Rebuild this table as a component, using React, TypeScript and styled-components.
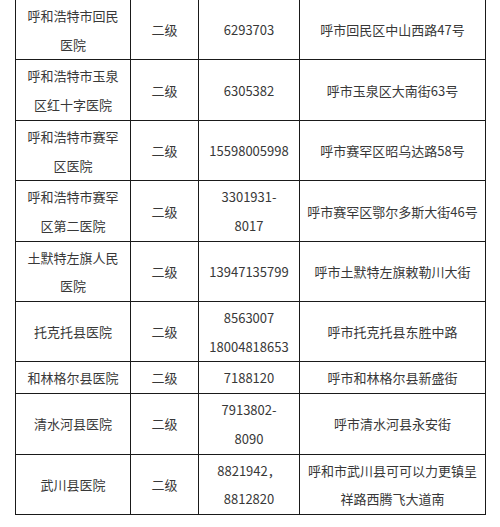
import styled, { createGlobalStyle } from 'styled-components'

const GlobalStyle = createGlobalStyle`
  body {
    margin: 0;
    background: #fff;
    font-family: "Noto Sans CJK SC", "Noto Sans", sans-serif;
  }
`

const Page = styled.div`
  padding-left: 15px;
  margin-top: -1px;
`

const Table = styled.table`
  width: 470px;
  border-collapse: collapse;
  table-layout: fixed;
  border: 1px solid #777;
  color: #383838;
  font-size: 13px;
  line-height: 28.7px;
`

const Col = styled.col<{ $w: number }>`
  width: ${(p) => p.$w}px;
`

const Cell = styled.td`
  border: 1px solid #1a1a1a;
  padding: 2px 7px 0;
  text-align: center;
  vertical-align: middle;
  word-break: break-all;
`

const Line = styled.div`
  white-space: nowrap;
`

const rows = [
  { name: '呼和浩特市回民医院', phone: ['6293703'], addr: '呼市回民区中山西路47号' },
  { name: '呼和浩特市玉泉区红十字医院', phone: ['6305382'], addr: '呼市玉泉区大南街63号' },
  { name: '呼和浩特市赛罕区医院', phone: ['15598005998'], addr: '呼市赛罕区昭乌达路58号' },
  { name: '呼和浩特市赛罕区第二医院', phone: ['3301931-', '8017'], addr: '呼市赛罕区鄂尔多斯大街46号' },
  { name: '土默特左旗人民医院', phone: ['13947135799'], addr: '呼市土默特左旗敕勒川大街' },
  { name: '托克托县医院', phone: ['8563007', '18004818653'], addr: '呼市托克托县东胜中路' },
  { name: '和林格尔县医院', phone: ['7188120'], addr: '呼市和林格尔县新盛街' },
  { name: '清水河县医院', phone: ['7913802-', '8090'], addr: '呼市清水河县永安街' },
  { name: '武川县医院', phone: ['8821942，', '8812820'], addr: '呼和市武川县可可以力更镇呈祥路西腾飞大道南' },
]

export default function App() {
  return (
    <>
      <GlobalStyle />
      <Page>
        <Table>
          <colgroup>
            <Col $w={115} />
            <Col $w={68} />
            <Col $w={101} />
            <Col $w={186} />
          </colgroup>
          <tbody>
            {rows.map((r) => (
              <tr key={r.name}>
                <Cell>{r.name}</Cell>
                <Cell>二级</Cell>
                <Cell>
                  {r.phone.map((p, i) => (
                    <Line key={i}>{p}</Line>
                  ))}
                </Cell>
                <Cell>{r.addr}</Cell>
              </tr>
            ))}
          </tbody>
        </Table>
      </Page>
    </>
  )
}
